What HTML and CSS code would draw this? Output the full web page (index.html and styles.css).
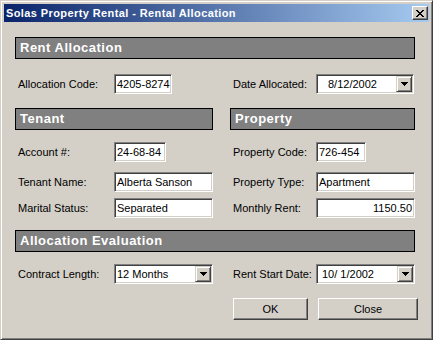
FILE: index.html
```html
<!DOCTYPE html>
<html lang="en">
<head>
    <meta charset="UTF-8">
    <title>Solas Property Rental - Rental Allocation</title>
    <link rel="stylesheet" href="styles.css">
</head>
<body>
<div class="window">
    <div class="titlebar">
        <span class="title">Solas Property Rental - Rental Allocation</span>
        <span class="tbtn">
            <svg width="8" height="7" viewBox="0 0 8 7" shape-rendering="crispEdges">
                <path d="M0 0h2v1H0zM6 0h2v1H6zM1 1h2v1H1zM5 1h2v1H5zM2 2h4v1H2zM3 3h2v1H3zM2 4h4v1H2zM1 5h2v1H1zM5 5h2v1H5zM0 6h2v1H0zM6 6h2v1H6z" fill="#000"/>
            </svg>
        </span>
    </div>

    <div class="content">
        <div class="band">Rent Allocation</div>

        <div class="row mt15">
            <div class="field">
                <label>Allocation Code:</label>
                <div class="edit w58">4205-8274</div>
            </div>
            <div class="field">
                <label>Date Allocated:</label>
                <div class="combo w98">
                    <span class="val pad-date">8/12/2002</span>
                    <span class="drop"><svg width="7" height="4" viewBox="0 0 7 4" shape-rendering="crispEdges"><path d="M0 0h7v1H0zM1 1h5v1H1zM2 2h3v1H2zM3 3h1v1H3z" fill="#000"/></svg></span>
                </div>
            </div>
        </div>

        <div class="row mt14">
            <div class="band">Tenant</div>
            <div class="band">Property</div>
        </div>

        <div class="row mt12">
            <div class="field">
                <label>Account #:</label>
                <div class="edit w52">24-68-84</div>
            </div>
            <div class="field">
                <label>Property Code:</label>
                <div class="edit w50">726-454</div>
            </div>
        </div>

        <div class="row mt10">
            <div class="field">
                <label>Tenant Name:</label>
                <div class="edit w99">Alberta Sanson</div>
            </div>
            <div class="field">
                <label>Property Type:</label>
                <div class="edit w99">Apartment</div>
            </div>
        </div>

        <div class="row mt6">
            <div class="field">
                <label>Marital Status:</label>
                <div class="edit w99">Separated</div>
            </div>
            <div class="field">
                <label>Monthly Rent:</label>
                <div class="edit w99 num">1150.50</div>
            </div>
        </div>

        <div class="band mt12">Allocation Evaluation</div>

        <div class="row mt12">
            <div class="field">
                <label>Contract Length:</label>
                <div class="combo w99">
                    <span class="val">12 Months</span>
                    <span class="drop"><svg width="7" height="4" viewBox="0 0 7 4" shape-rendering="crispEdges"><path d="M0 0h7v1H0zM1 1h5v1H1zM2 2h3v1H2zM3 3h1v1H3z" fill="#000"/></svg></span>
                </div>
            </div>
            <div class="field">
                <label>Rent Start Date:</label>
                <div class="combo w99">
                    <span class="val pad-date2">10/ 1/2002</span>
                    <span class="drop"><svg width="7" height="4" viewBox="0 0 7 4" shape-rendering="crispEdges"><path d="M0 0h7v1H0zM1 1h5v1H1zM2 2h3v1H2zM3 3h1v1H3z" fill="#000"/></svg></span>
                </div>
            </div>
        </div>

        <div class="row mt14">
            <div></div>
            <div class="buttons">
                <button type="button" class="btn ok">OK</button>
                <button type="button" class="btn close">Close</button>
            </div>
        </div>
    </div>
</div>
</body>
</html>
```

FILE: styles.css
```css
body {
    margin: 0;
    background: #d4d0c8;
    font-family: "Liberation Sans", Arial, sans-serif;
    font-size: 11px;
    color: #000;
}

.window {
    width: 433px;
    height: 340px;
    box-sizing: border-box;
    padding: 3px;
    background: #d4d0c8;
    border: 1px solid;
    border-color: #d4d0c8 #404040 #404040 #d4d0c8;
    box-shadow: inset 1px 1px #fff, inset -1px -1px #808080;
}

/* title bar */
.titlebar {
    height: 18px;
    display: flex;
    align-items: center;
    justify-content: space-between;
    padding: 0 1px 0 2px;
    background: linear-gradient(to right, #0a246a, #a6caf0);
    color: #fff;
    font-weight: bold;
    font-size: 11px;
    letter-spacing: 0.4px;
}

.tbtn {
    width: 16px;
    height: 14px;
    box-sizing: border-box;
    display: flex;
    align-items: center;
    justify-content: center;
    background: #d4d0c8;
    border: 1px solid;
    border-color: #fff #404040 #404040 #fff;
    box-shadow: inset -1px -1px #808080;
}

.tbtn svg {
    display: block;
    margin-left: -1px;
}

/* form */
.content {
    padding: 15px 14px 0 11px;
}

.band {
    height: 22px;
    box-sizing: border-box;
    padding-left: 4px;
    border: 1px solid #000;
    background: #808080;
    color: #fff;
    font-size: 13px;
    font-weight: bold;
    letter-spacing: 0.5px;
    line-height: 20px;
}

.row {
    display: grid;
    grid-template-columns: 198px 185px;
    column-gap: 17px;
}

.mt6 { margin-top: 6px; }
.mt10 { margin-top: 10px; }
.mt12 { margin-top: 12px; }
.mt14 { margin-top: 14px; }
.mt15 { margin-top: 15px; }

.field {
    display: flex;
    align-items: center;
    height: 20px;
}

.field label {
    width: 99px;
    box-sizing: border-box;
    padding-left: 3px;
    flex: none;
}

.row > .field:last-child label {
    width: 86px;
}

.edit,
.combo {
    height: 20px;
    box-sizing: border-box;
    background: #fff;
    border: 1px solid;
    border-color: #808080 #fff #fff #808080;
    box-shadow: inset 1px 1px #404040, inset -1px -1px #d4d0c8;
    line-height: 18px;
    white-space: pre;
}

.edit {
    padding: 0 2px;
}

.edit.num {
    text-align: right;
}

.w50 { width: 50px; }
.w52 { width: 52px; }
.w58 { width: 58px; }
.w98 { width: 98px; }
.w99 { width: 99px; }

.combo {
    display: flex;
    align-items: center;
    justify-content: space-between;
    padding: 1px;
}

.combo .val {
    padding-left: 1px;
    line-height: 16px;
}

.combo .pad-date {
    padding-left: 10px;
}

.combo .pad-date2 {
    padding-left: 4px;
}

.drop {
    width: 16px;
    height: 16px;
    box-sizing: border-box;
    display: flex;
    align-items: center;
    justify-content: center;
    background: #d4d0c8;
    border: 1px solid;
    border-color: #d4d0c8 #404040 #404040 #d4d0c8;
    box-shadow: inset 1px 1px #fff, inset -1px -1px #808080;
}

.drop svg {
    display: block;
}

/* buttons */
.buttons {
    display: flex;
    gap: 10px;
    padding-left: 3px;
}

.btn {
    height: 22px;
    padding: 0;
    box-sizing: border-box;
    background: #d4d0c8;
    border: 1px solid;
    border-color: #fff #404040 #404040 #fff;
    box-shadow: inset -1px -1px #808080;
    font-family: "Liberation Sans", Arial, sans-serif;
    font-size: 11px;
    color: #000;
    flex: none;
}

.ok {
    width: 75px;
}

.close {
    width: 100px;
}
```
